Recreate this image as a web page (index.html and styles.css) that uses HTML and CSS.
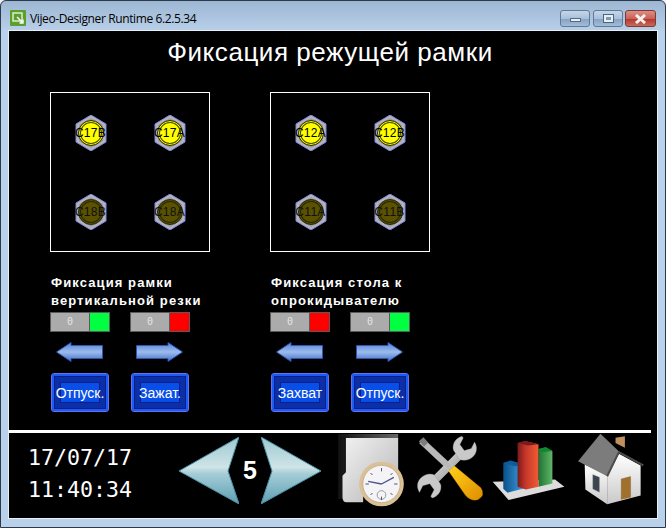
FILE: index.html
```html
<!DOCTYPE html>
<html lang="ru">
<head>
    <meta charset="UTF-8">
    <title>Vijeo-Designer Runtime 6.2.5.34</title>
    <link rel="stylesheet" href="styles.css">
</head>
<body>

<svg class="defs" width="0" height="0">
    <defs>
        <linearGradient id="arrowFill" x1="0" y1="0" x2="0" y2="1">
            <stop offset="0" stop-color="#4f80dc"/>
            <stop offset="0.5" stop-color="#9dbcec"/>
            <stop offset="1" stop-color="#3f70cc"/>
        </linearGradient>
        <linearGradient id="navFill" x1="0" y1="0" x2="0" y2="1">
            <stop offset="0" stop-color="#9cc8d2"/>
            <stop offset="0.45" stop-color="#cfe4e6"/>
            <stop offset="0.55" stop-color="#a5ccd6"/>
            <stop offset="1" stop-color="#5d9fb2"/>
        </linearGradient>
        <linearGradient id="folderFill" x1="0" y1="0" x2="1" y2="1">
            <stop offset="0" stop-color="#f2f2f2"/>
            <stop offset="1" stop-color="#b5b5b5"/>
        </linearGradient>
        <linearGradient id="folderEdge" x1="0" y1="0" x2="1" y2="0">
            <stop offset="0" stop-color="#111111"/>
            <stop offset="1" stop-color="#666666"/>
        </linearGradient>
        <linearGradient id="steelFill" x1="0" y1="0" x2="1" y2="1">
            <stop offset="0" stop-color="#e6e6e6"/>
            <stop offset="1" stop-color="#8f8f8f"/>
        </linearGradient>
        <linearGradient id="handleFill" x1="0" y1="0" x2="1" y2="1">
            <stop offset="0" stop-color="#ffd21a"/>
            <stop offset="1" stop-color="#e08c00"/>
        </linearGradient>
        <linearGradient id="blueBar" x1="0" y1="0" x2="1" y2="0">
            <stop offset="0" stop-color="#0a4f88"/>
            <stop offset="1" stop-color="#3f9fdf"/>
        </linearGradient>
        <linearGradient id="redBar" x1="0" y1="0" x2="1" y2="0">
            <stop offset="0" stop-color="#7a1a1c"/>
            <stop offset="0.4" stop-color="#c8382a"/>
            <stop offset="1" stop-color="#ee5c34"/>
        </linearGradient>
        <linearGradient id="greenBar" x1="0" y1="0" x2="1" y2="0">
            <stop offset="0" stop-color="#1c7436"/>
            <stop offset="1" stop-color="#62b566"/>
        </linearGradient>
        <linearGradient id="wallFill" x1="0" y1="0" x2="0" y2="1">
            <stop offset="0" stop-color="#ffffff"/>
            <stop offset="1" stop-color="#c9c9c9"/>
        </linearGradient>
        <symbol id="bolt" viewBox="0 0 32 36">
            <polygon points="16,0 31,9 31,27 16,36 1,27 1,9" fill="#b4b4c0" stroke="#7f86e0" stroke-width="1"/>
            <polygon points="16,3 28,10 28,26 16,33 4,26 4,10" fill="#9c9ca4"/>
        </symbol>
        <symbol id="arrow" viewBox="0 0 47 20">
            <path d="M0.5 10 L15 0.5 V3.5 H46.5 V16.5 H15 V19.5 Z" fill="url(#arrowFill)" stroke="#2f55b0"/>
        </symbol>
        <symbol id="navArrow" viewBox="0 0 60 67">
            <path d="M0 34 L60 0 L49 34 L60 67 Z" fill="url(#navFill)" stroke="#4a90a4" stroke-width="1"/>
        </symbol>
    </defs>
</svg>

<div class="window">
    <div class="titlebar">
        <svg class="app-icon" viewBox="0 0 16 16">
            <rect width="16" height="16" rx="1" fill="#5c9f2e"/>
            <rect x="3" y="3" width="9" height="8" fill="none" stroke="#e4f2d4" stroke-width="1.4"/>
            <path d="M7 7 L13 13 M13 9.5 V13 H9.5" fill="none" stroke="#ffffff" stroke-width="1.4"/>
        </svg>
        <span class="app-title">Vijeo-Designer Runtime 6.2.5.34</span>
        <div class="controls">
            <div class="ctl"><span class="glyph-min"></span></div>
            <div class="ctl"><span class="glyph-max"></span></div>
            <div class="ctl ctl-close">
                <svg width="15" height="10" viewBox="0 0 15 10">
                    <path d="M3 1 L12 9 M12 1 L3 9" stroke="#f4f0ee" stroke-width="3"/>
                </svg>
            </div>
        </div>
    </div>

    <div class="screen">
        <h1 class="screen-title">Фиксация режущей рамки</h1>

        <div class="panels">
            <!-- Рамка вертикальной резки -->
            <section class="panel">
                <div class="lights">
                    <div class="light on"><svg class="bolt"><use href="#bolt"/></svg><span class="lamp">C17B</span></div>
                    <div class="light on"><svg class="bolt"><use href="#bolt"/></svg><span class="lamp">C17A</span></div>
                    <div class="light"><svg class="bolt"><use href="#bolt"/></svg><span class="lamp">C18B</span></div>
                    <div class="light"><svg class="bolt"><use href="#bolt"/></svg><span class="lamp">C18A</span></div>
                </div>
                <div class="panel-label">Фиксация рамки<br>вертикальной резки</div>
                <div class="controls-grid">
                    <div class="status"><span class="value">0</span><span class="state green"></span></div>
                    <div class="status"><span class="value">0</span><span class="state red"></span></div>
                    <svg class="arrow arrow-left"><use href="#arrow"/></svg>
                    <svg class="arrow arrow-right"><use href="#arrow"/></svg>
                    <div class="hmi-btn">Отпуск.</div>
                    <div class="hmi-btn">Зажат.</div>
                </div>
            </section>

            <!-- Стол к опрокидывателю -->
            <section class="panel">
                <div class="lights">
                    <div class="light on"><svg class="bolt"><use href="#bolt"/></svg><span class="lamp">C12A</span></div>
                    <div class="light on"><svg class="bolt"><use href="#bolt"/></svg><span class="lamp">C12B</span></div>
                    <div class="light"><svg class="bolt"><use href="#bolt"/></svg><span class="lamp">C11A</span></div>
                    <div class="light"><svg class="bolt"><use href="#bolt"/></svg><span class="lamp">C11B</span></div>
                </div>
                <div class="panel-label">Фиксация стола к<br>опрокидывателю</div>
                <div class="controls-grid">
                    <div class="status"><span class="value">0</span><span class="state red"></span></div>
                    <div class="status"><span class="value">0</span><span class="state green"></span></div>
                    <svg class="arrow arrow-left"><use href="#arrow"/></svg>
                    <svg class="arrow arrow-right"><use href="#arrow"/></svg>
                    <div class="hmi-btn">Захват</div>
                    <div class="hmi-btn">Отпуск.</div>
                </div>
            </section>
        </div>

        <div class="divider"></div>

        <div class="navbar">
            <div class="clock">
                <div>17/07/17</div>
                <div>11:40:34</div>
            </div>
            <div class="pager">
                <svg class="nav-arrow"><use href="#navArrow"/></svg>
                <span class="page-no">5</span>
                <svg class="nav-arrow flip"><use href="#navArrow"/></svg>
            </div>

            <!-- папка с часами -->
            <svg class="icon icon-folder" viewBox="25 30 200 225">
                <path d="M25 30 H205 V42 H45 V225 H25 Z" fill="url(#folderEdge)"/>
                <path d="M48 42 H205 V210 H100 V235 H50 Q38 235 38 220 V155 L48 145 Z" fill="url(#folderFill)"/>
                <circle cx="155" cy="180" r="67" fill="#d9c096"/>
                <circle cx="155" cy="180" r="56" fill="#f4f4f6" stroke="#b79e76" stroke-width="2"/>
                <circle cx="155" cy="213" r="13" fill="none" stroke="#9a9aa8" stroke-width="3"/>
                <path d="M155 180 L115 172 M155 180 L192 160" stroke="#50508c" stroke-width="4" fill="none"/>
                <path d="M155 132 V142 M155 218 V228 M107 180 H117 M193 180 H203 M122 147 L128 153 M182 207 L188 213 M122 213 L128 207 M182 153 L188 147" stroke="#555566" stroke-width="3"/>
            </svg>

            <!-- ключ и отвертка -->
            <svg class="icon icon-tools" viewBox="260 30 210 205">
                <path d="M305 180 L395 90" stroke="url(#steelFill)" stroke-width="24" fill="none"/>
                <path id="jaw" d="M372 78 C368 58 380 42 398 37 L402 42 L392 62 L405 80 L426 74 L436 54 C448 72 442 96 420 106 C408 111 398 110 390 106 Z" fill="#c9c9c9" stroke="#8a8a8a"/>
                <use href="#jaw" transform="rotate(180 353 130)"/>
                <path d="M282 44 L372 128 L360 142 L270 58 Z" fill="#b9b9b9" stroke="#e2e2e2"/>
                <path d="M268 52 L282 40 L296 56 L284 68 Z" fill="#7c7c7c"/>
                <path d="M358 142 L375 126 L455 192 Q470 215 446 228 Q424 234 408 214 Z" fill="url(#handleFill)" stroke="#c47a00"/>
            </svg>

            <!-- диаграмма -->
            <svg class="icon icon-chart" viewBox="490 50 220 182">
                <polygon points="492,175 680,168 708,190 540,230" fill="#dcdcdc"/>
                <polygon points="524,118 586,124 586,195 537,208 524,196" fill="url(#blueBar)"/>
                <polygon points="524,118 546,111 586,122 560,128" fill="#0a5d9e"/>
                <polygon points="630,76 652,71 672,82 672,180 630,190" fill="url(#greenBar)"/>
                <polygon points="630,76 652,71 672,82 640,86" fill="#0c8a2c"/>
                <polygon points="567,58 590,52 630,62 630,190 592,198 567,190" fill="url(#redBar)"/>
                <polygon points="567,58 590,52 630,62 598,66" fill="#7c1a20"/>
            </svg>

            <!-- дом -->
            <svg class="icon icon-house" viewBox="745 28 200 215">
                <polygon points="860,42 888,38 888,72 860,58" fill="#c09060"/>
                <polygon points="768,122 835,150 835,241 770,197" fill="url(#wallFill)"/>
                <polygon points="835,155 870,90 935,125 935,215 835,241" fill="url(#wallFill)"/>
                <polygon points="815,30 748,112 835,157 872,85" fill="#7c7c7c"/>
                <path d="M835 157 L870 85 L943 125" fill="none" stroke="#4c4c4c" stroke-width="6"/>
                <polygon points="792,152 812,160 812,205 792,195" fill="#3c4450" stroke="#a0a0a0"/>
                <polygon points="877,165 905,158 905,220 877,226" fill="#a0702c" stroke="#7a5218"/>
            </svg>
        </div>
    </div>
</div>

</body>
</html>
```

FILE: styles.css
```css
html, body {
    margin: 0;
    padding: 0;
    background: #f0f0f0;
}
.defs {
    display: block;
    height: 0;
}
.window {
    width: 666px;
    height: 528px;
    box-sizing: border-box;
    border: 1px solid #2a3a4a;
    border-radius: 6px 6px 0 0;
    background: linear-gradient(to bottom, #9db6d2 0, #b9d1ea 31px, #b9d1ea 100%);
    display: flex;
    flex-direction: column;
    overflow: hidden;
}
.titlebar {
    height: 30px;
    flex: none;
    display: flex;
    align-items: flex-start;
    box-sizing: border-box;
    padding: 9px 9px 0 9px;
}
.app-icon {
    width: 16px;
    height: 16px;
    flex: none;
}
.app-title {
    margin-left: 4px;
    font-family: "Open Sans", sans-serif;
    font-size: 12px;
    line-height: 17px;
    letter-spacing: -0.38px;
    color: #000;
}
.controls {
    margin-left: auto;
    display: flex;
    gap: 3px;
}
.ctl {
    width: 30px;
    height: 17px;
    box-sizing: border-box;
    border: 1px solid #5f7a98;
    border-radius: 3px;
    background: linear-gradient(to bottom, #c6d6e8 0, #a9c0da 50%, #88a4c4 55%, #a3bcd6 100%);
    display: flex;
    align-items: center;
    justify-content: center;
}
.ctl-close {
    width: 31px;
    margin-left: -1px;
    border-color: #7c3a32;
    background: linear-gradient(to bottom, #dc8e84 0, #c9625a 50%, #b23a30 55%, #c86a58 100%);
}
.glyph-min {
    width: 11px;
    height: 4px;
    margin-top: 3px;
    background: #e8eef4;
    border: 1px solid #4f6a88;
    box-sizing: border-box;
}
.glyph-max {
    width: 11px;
    height: 9px;
    border: 1px solid #4a6484;
    background: #e8eef4;
    box-sizing: border-box;
    padding: 2px;
    display: flex;
}
.glyph-max::after {
    content: "";
    flex: 1;
    background: #7f98b4;
}

.screen {
    margin: 0 8px 9px 8px;
    flex: 1;
    background: #000;
    display: flex;
    flex-direction: column;
    outline: 1px solid #e6eef6;
}
.screen-title {
    margin: 0;
    height: 61px;
    box-sizing: border-box;
    padding: 4px 6px 0 0;
    text-align: center;
    font-family: "Liberation Sans", Arial, sans-serif;
    font-weight: normal;
    font-size: 26px;
    line-height: 34px;
    letter-spacing: 0.55px;
    color: #fff;
}
.panels {
    display: flex;
    gap: 60px;
    padding-left: 41px;
}
.panel {
    width: 160px;
}
.lights {
    width: 160px;
    height: 160px;
    box-sizing: border-box;
    border: 1px solid #fff;
    display: grid;
    grid-template-columns: 1fr 1fr;
    grid-template-rows: 1fr 1fr;
    place-items: center;
}
.light {
    width: 32px;
    height: 36px;
    display: grid;
    place-items: center;
}
.light > * {
    grid-area: 1 / 1;
}
.bolt {
    width: 32px;
    height: 36px;
}
.lamp {
    width: 26px;
    height: 26px;
    box-sizing: border-box;
    border-radius: 50%;
    background: #5a5200;
    border: 1px solid #2a2a10;
    box-shadow: inset 0 0 0 1px #5a5200, inset 0 0 0 2px #2a2800;
    font-family: "Liberation Sans", Arial, sans-serif;
    font-size: 12px;
    line-height: 24px;
    letter-spacing: 0.3px;
    text-align: center;
    white-space: nowrap;
    display: flex;
    justify-content: center;
    color: #111;
}
.light.on .lamp {
    background: #ffff00;
    box-shadow: inset 0 0 0 1px #ffff00, inset 0 0 0 2px #4a4a00;
    color: #000;
}
.panel-label {
    margin-top: 22px;
    margin-left: 1px;
    font-family: "Liberation Sans", Arial, sans-serif;
    font-weight: bold;
    font-size: 13px;
    line-height: 18px;
    letter-spacing: 1.1px;
    white-space: nowrap;
    color: #fff;
}
.controls-grid {
    margin-top: 2px;
    display: grid;
    grid-template-columns: 60px 60px;
    column-gap: 20px;
    grid-template-rows: 20px 20px 39px;
    row-gap: 10px;
}
.status {
    display: flex;
    height: 20px;
    box-sizing: border-box;
    border: 1px solid #5a5a5a;
}
.value {
    width: 39px;
    box-sizing: border-box;
    background: #ababab;
    border-right: 1px solid #5a5a5a;
    text-align: center;
    font-family: "DejaVu Sans Mono", monospace;
    font-size: 10px;
    line-height: 18px;
    color: #e4e4e4;
}
.state {
    flex: 1;
}
.state.green {
    background: #00ff40;
}
.state.red {
    background: #ff0000;
}
.arrow {
    width: 47px;
    height: 20px;
}
.arrow-left {
    margin-left: 6px;
}
.arrow-right {
    margin-left: 6px;
    transform: scaleX(-1);
}
.hmi-btn {
    width: 58px;
    height: 39px;
    margin-left: 1px;
    margin-top: 1px;
    box-sizing: border-box;
    border: 1px solid #6a6cf2;
    border-radius: 3px;
    background: #0a4ee8;
    box-shadow: inset 0 0 0 2px #1a5cf6, inset 0 0 0 3px #08208c, inset 0 0 0 8px #0c2fa8, inset 0 0 0 9px #08208c;
    display: flex;
    align-items: center;
    justify-content: center;
    font-family: "Liberation Sans", Arial, sans-serif;
    font-size: 14px;
    white-space: nowrap;
    color: #fff;
}

.divider {
    margin-top: 19px;
    margin-right: 6px;
    height: 3px;
    flex: none;
    background: #fff;
}
.navbar {
    flex: 1;
    display: flex;
    align-items: flex-start;
    padding-left: 19px;
}
.clock {
    width: 126px;
    margin-top: 9px;
    font-family: "DejaVu Sans Mono", monospace;
    font-size: 21.6px;
    line-height: 32px;
    color: #fff;
}
.pager {
    margin-top: 4px;
    display: flex;
    align-items: center;
    margin-left: 25px;
}
.nav-arrow {
    width: 60px;
    height: 67px;
}
.nav-arrow.flip {
    transform: scaleX(-1);
}
.page-no {
    width: 22px;
    text-align: center;
    font-family: "Liberation Sans", Arial, sans-serif;
    font-weight: bold;
    font-size: 25px;
    color: #fff;
}
.icon {
    flex: none;
}
.icon-folder {
    width: 67px;
    height: 75px;
    margin-left: 17px;
    margin-top: 1px;
}
.icon-tools {
    width: 70px;
    height: 68px;
    margin-left: 11px;
    margin-top: 1px;
}
.icon-chart {
    width: 73px;
    height: 61px;
    margin-left: 6px;
    margin-top: 7px;
}
.icon-house {
    width: 67px;
    height: 72px;
    margin-left: 12px;
    margin-top: 0;
}
```
